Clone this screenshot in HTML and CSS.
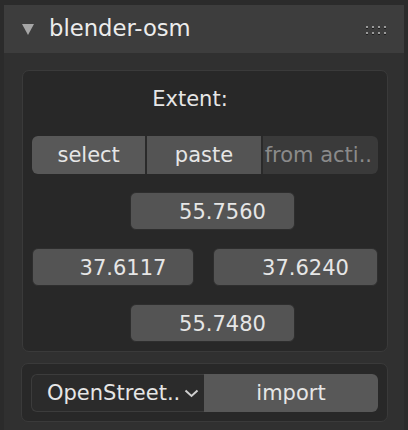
FILE: index.html
```html
<!DOCTYPE html>
<html lang="en">
<head>
  <meta charset="UTF-8">
  <title>blender-osm</title>
  <link rel="stylesheet" href="styles.css">
</head>
<body>
  <div class="panel">
    <!-- Panel header -->
    <div class="panel-header">
      <svg class="disclosure" width="12" height="11" viewBox="0 0 12 11">
        <polygon points="0,0 12,0 6,11" fill="#a6a6a6"/>
      </svg>
      <span class="panel-title">blender-osm</span>
      <svg class="grip" width="22" height="10" viewBox="0 0 22 10">
        <g fill="#9a9a9a">
          <rect x="1" y="1" width="2" height="2"/><rect x="7" y="1" width="2" height="2"/>
          <rect x="13" y="1" width="2" height="2"/><rect x="19" y="1" width="2" height="2"/>
          <rect x="1" y="7" width="2" height="2"/><rect x="7" y="7" width="2" height="2"/>
          <rect x="13" y="7" width="2" height="2"/><rect x="19" y="7" width="2" height="2"/>
        </g>
        <g fill="#1c1c1c">
          <rect x="1" y="3" width="2" height="1"/><rect x="7" y="3" width="2" height="1"/>
          <rect x="13" y="3" width="2" height="1"/><rect x="19" y="3" width="2" height="1"/>
          <rect x="1" y="9" width="2" height="1"/><rect x="7" y="9" width="2" height="1"/>
          <rect x="13" y="9" width="2" height="1"/><rect x="19" y="9" width="2" height="1"/>
        </g>
      </svg>
    </div>

    <div class="panel-body">
      <!-- Extent box -->
      <div class="box">
        <div class="label-row">Extent:</div>

        <div class="seg-row">
          <button class="seg">select</button>
          <button class="seg seg-mid">paste</button>
          <button class="seg seg-off">from acti..</button>
        </div>

        <div class="field-row">
          <div class="field field-center">55.7560</div>
        </div>

        <div class="field-pair">
          <div class="field">37.6117</div>
          <div class="field">37.6240</div>
        </div>

        <div class="field-row">
          <div class="field field-center">55.7480</div>
        </div>
      </div>

      <!-- Import box -->
      <div class="box box-import">
        <div class="import-row">
          <div class="dropdown">
            <span>OpenStreet..</span>
            <svg width="15" height="9" viewBox="0 0 15 9">
              <polyline points="1.5,1.5 7.5,7 13.5,1.5" fill="none" stroke="#cfcfcf" stroke-width="2"/>
            </svg>
          </div>
          <button class="import-btn">import</button>
        </div>
      </div>
    </div>
  </div>
</body>
</html>
```

FILE: styles.css
```css
body {
  margin: 0;
  padding: 5px 0 0 0;
  background-color: #2b2b2b;
  font-family: "DejaVu Sans", "Liberation Sans", sans-serif;
  color: #e6e6e6;
  font-size: 21px;
  width: 408px;
  height: 430px;
  box-sizing: border-box;
  overflow: hidden;
}

.panel {
  margin: 0 4px;
  background-color: #303030;
  height: 425px;
}

.panel-header {
  display: flex;
  align-items: center;
  height: 48px;
  padding: 0 17px 0 18px;
  background-color: #3d3d3d;
}

.disclosure {
  margin-right: 15px;
}

.panel-title {
  flex: 1;
  font-size: 22.7px;
  color: #ececec;
  margin-top: -2px;
}

.grip {
  margin-top: 2px;
}

.panel-body {
  padding: 17px 16px 0 18px;
}

.box {
  background-color: #282828;
  border: 1px solid #3a3a3a;
  border-radius: 7px;
  padding: 9px 9px 9px 9px;
  display: flex;
  flex-direction: column;
  gap: 18px;
}

.box-import {
  margin-top: 11px;
  margin-left: -1px;
  padding: 10px 9px 9px 9px;
}

.label-row {
  height: 38px;
  line-height: 38px;
  text-align: center;
  padding-right: 30px;
}

.seg-row {
  display: flex;
  gap: 2px;
  height: 38px;
  background-color: #2a2a2a;
  border-radius: 6px;
}

.seg {
  flex: 1;
  border: none;
  margin: 0;
  padding: 0;
  font: inherit;
  color: #e6e6e6;
  background-color: #585858;
  white-space: nowrap;
  overflow: hidden;
}

.seg:first-child {
  border-radius: 6px 0 0 6px;
}

.seg-mid {
  background-color: #545454;
}

.seg-off {
  background-color: #3a3a3a;
  color: #8a8a8a;
  border-radius: 0 6px 6px 0;
  text-align: left;
  padding-left: 2px;
}

.field-row {
  display: flex;
}

.field {
  height: 38px;
  line-height: 38px;
  box-sizing: border-box;
  background-color: #545454;
  border: 1px solid #2e2e2e;
  border-radius: 6px;
  text-align: center;
  padding-left: 20px;
  color: #e6e6e6;
}

.field-center {
  width: 165px;
  margin-left: 98px;
}

.field-pair {
  display: grid;
  grid-template-columns: 162px 165px;
  gap: 19px;
}

.import-row {
  display: flex;
  height: 38px;
}

.dropdown {
  width: 173px;
  box-sizing: border-box;
  display: flex;
  align-items: center;
  gap: 4px;
  padding-left: 15px;
  background-color: #2b2b2b;
  border: 1px solid #3c3c3c;
  border-right: none;
  border-radius: 6px 0 0 6px;
}

.import-btn {
  flex: 1;
  border: none;
  margin: 0;
  font: inherit;
  color: #e6e6e6;
  background-color: #585858;
  border-radius: 0 6px 6px 0;
}
```
